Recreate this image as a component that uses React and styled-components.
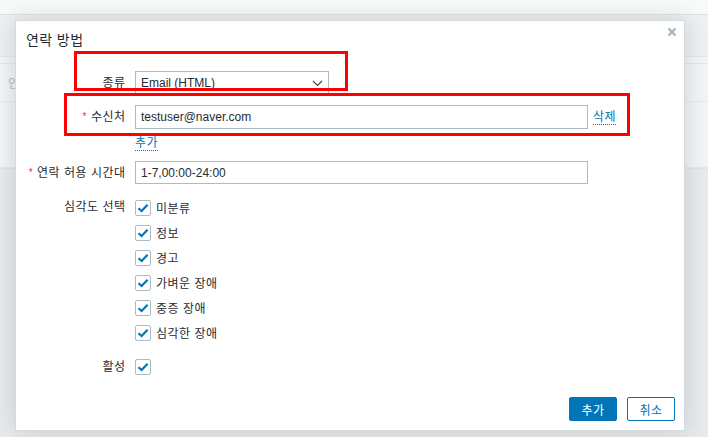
import React from 'react';
import styled, { createGlobalStyle } from 'styled-components';

const GlobalStyle = createGlobalStyle`
    html, body {
        margin: 0;
        padding: 0;
        width: 708px;
        height: 437px;
        overflow: hidden;
        background: #e8ebed;
        font-family: "Liberation Sans", "Noto Sans CJK KR", Arial, sans-serif;
        font-size: 12px;
        color: #1f2c33;
    }
`

const Page = styled.div`
    position: relative;
    width: 708px;
    height: 437px;
    display: flex;
    flex-direction: column;
`

const TopStrip = styled.div`
    height: 14px;
    background: #f8f9f9;
    border-bottom: 1px solid #dfe3e6;
`

const Toolbar = styled.div`
    height: 41px;
    background: #eef0f1;
    border-bottom: 1px solid #e2e5e8;
`

const Table = styled.div`
    display: flex;
    flex-direction: column;
    background: #f3f4f5;
    border-bottom: 1px solid #e0e3e6;
`

const TableRow = styled.div`
    height: ${p => p.$h}px;
    display: flex;
    align-items: center;
    padding-left: 8px;
    color: #b3bbbf;
    border-bottom: 1px solid #e6e9eb;
`

const Modal = styled.div`
    position: absolute;
    left: 15px;
    top: 20px;
    width: 670px;
    height: 411px;
    box-sizing: border-box;
    background: #fff;
    border: 1px solid #d3d9dc;
    box-shadow: 0 0 22px rgba(40, 55, 65, 0.18);
    display: flex;
    flex-direction: column;
`

const Title = styled.h4`
    margin: 0;
    padding: 9px 10px 0;
    font-size: 14px;
    line-height: 20px;
    font-weight: normal;
    letter-spacing: 0.4px;
    color: #1f2c33;
`

const CloseButton = styled.button`
    position: absolute;
    right: 6px;
    top: 5px;
    width: 12px;
    height: 12px;
    padding: 0;
    border: none;
    background: none;
    display: flex;
    align-items: center;
    justify-content: center;
`

const Form = styled.div`
    display: grid;
    grid-template-columns: 99px 1fr;
    column-gap: 10px;
    row-gap: 10px;
    padding: 21px 10px 0;
    align-items: start;
`

const Label = styled.div`
    text-align: right;
    line-height: ${p => p.$lh || 24}px;
    white-space: nowrap;
    letter-spacing: 0.5px;
    margin-right: -0.5px;
`

const Star = styled.span`
    color: #e33734;
    font-size: 10px;
    margin-right: 4px;
    vertical-align: 1px;
`

const Field = styled.div`
    display: flex;
    flex-direction: column;
    align-items: flex-start;
`

const InputRow = styled.div`
    display: flex;
    align-items: center;
    gap: 5px;
`

const Input = styled.div`
    box-sizing: border-box;
    width: ${p => p.$w}px;
    height: ${p => p.$h || 24}px;
    border: 1px solid #acbbc0;
    background: #fff;
    padding: 0 5px;
    display: flex;
    align-items: center;
    justify-content: space-between;
    font-family: "Liberation Sans", Arial, sans-serif;
    font-size: 12px;
    color: #1f2c33;
`

const Link = styled.span`
    color: #0275b8;
    border-bottom: 1px dotted #0275b8;
    line-height: 14px;
    letter-spacing: 0.5px;
    margin-top: ${p => p.$mt || 0}px;
    cursor: pointer;
`

const CheckList = styled.div`
    display: flex;
    flex-direction: column;
`

const CheckItem = styled.label`
    height: ${p => p.$h || 25}px;
    display: flex;
    align-items: center;
    gap: 5px;
    letter-spacing: 0.5px;
`

const Box = styled.span`
    box-sizing: border-box;
    width: 16px;
    height: 16px;
    border: 1px solid #acbbc0;
    border-radius: 2px;
    background: #fff;
    display: flex;
    align-items: center;
    justify-content: center;
`

const Footer = styled.div`
    margin-top: auto;
    display: flex;
    justify-content: flex-end;
    gap: 10px;
    padding: 0 9px 9px;
`

const Button = styled.button`
    box-sizing: border-box;
    width: 48px;
    height: 24px;
    border-radius: 2px;
    border: 1px solid #0275b8;
    background: ${p => (p.$primary ? '#0275b8' : '#fff')};
    color: ${p => (p.$primary ? '#fff' : '#0275b8')};
    font-family: "Liberation Sans", "Noto Sans CJK KR", sans-serif;
    font-size: 12px;
    letter-spacing: 0.5px;
    padding: 0;
`

const Marker = styled.div`
    position: absolute;
    left: ${p => p.$x}px;
    top: ${p => p.$y}px;
    width: ${p => p.$w}px;
    height: ${p => p.$h}px;
    box-sizing: border-box;
    border: 3px solid #ff0000;
    pointer-events: none;
`

function Check() {
    return (
        <Box>
            <svg width="12" height="10" viewBox="0 0 12 10">
                <path d="M1.5 5.2 L4.6 8 L10.6 1.8" fill="none" stroke="#0275b8" strokeWidth="2.2" />
            </svg>
        </Box>
    )
}

const severities = ['미분류', '정보', '경고', '가벼운 장애', '중증 장애', '심각한 장애']

export default function App() {
    return (
        <>
            <GlobalStyle />
            <Page>
                <TopStrip />
                <Toolbar />
                <Table>
                    <TableRow $h={6} />
                    <TableRow $h={37}>인</TableRow>
                    <TableRow $h={65} />
                </Table>

                <Modal>
                    <Title>연락 방법</Title>
                    <CloseButton>
                        <svg width="10" height="10" viewBox="0 0 10 10">
                            <path d="M1.5 1.5 L8.5 8.5 M8.5 1.5 L1.5 8.5" stroke="#a8b1b6" strokeWidth="2.2" />
                        </svg>
                    </CloseButton>

                    <Form>
                        <Label>종류</Label>
                        <Field>
                            <Input $w={194}>
                                <span>Email (HTML)</span>
                                <svg width="11" height="7" viewBox="0 0 11 7">
                                    <path d="M1 1 L5.5 5.5 L10 1" fill="none" stroke="#3a464d" strokeWidth="1.2" />
                                </svg>
                            </Input>
                        </Field>

                        <Label><Star>*</Star>수신처</Label>
                        <Field>
                            <InputRow>
                                <Input $w={453}>testuser@naver.com</Input>
                                <Link>삭제</Link>
                            </InputRow>
                            <Link $mt={7}>추가</Link>
                        </Field>

                        <Label $lh={23}><Star>*</Star>연락 허용 시간대</Label>
                        <Field>
                            <Input $w={453} $h={23}>1-7,00:00-24:00</Input>
                        </Field>

                        <Label $lh={25}>심각도 선택</Label>
                        <CheckList>
                            {severities.map(s => (
                                <CheckItem key={s}>
                                    <Check />
                                    <span>{s}</span>
                                </CheckItem>
                            ))}
                        </CheckList>

                        <Label>활성</Label>
                        <CheckList>
                            <CheckItem $h={24}>
                                <Check />
                            </CheckItem>
                        </CheckList>
                    </Form>

                    <Footer>
                        <Button $primary>추가</Button>
                        <Button>취소</Button>
                    </Footer>

                    <Marker $x={58} $y={30} $w={274} $h={40} />
                    <Marker $x={48} $y={72} $w={566} $h={43} />
                </Modal>
            </Page>
        </>
    )
}
